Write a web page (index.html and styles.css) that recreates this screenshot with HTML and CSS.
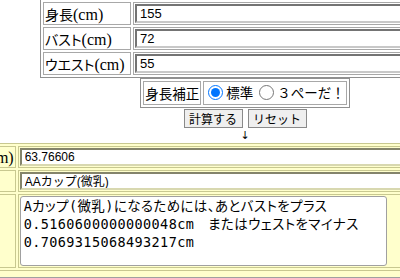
FILE: index.html
```html
<!DOCTYPE html>
<html lang="ja">
<head>
    <meta charset="UTF-8">
    <title>カップ計算</title>
    <link rel="stylesheet" href="styles.css">
</head>
<body>
<div class="page">
    <table class="body_size">
        <tr>
            <th>身長<span class="unit">(cm)</span></th>
            <td><input type="text" value="155"></td>
        </tr>
        <tr>
            <th>バスト<span class="unit">(cm)</span></th>
            <td><input type="text" value="72"></td>
        </tr>
        <tr>
            <th>ウエスト<span class="unit">(cm)</span></th>
            <td><input type="text" value="55"></td>
        </tr>
    </table>

    <table class="adjust">
        <tr>
            <th>身長補正</th>
            <td>
                <label><input type="radio" name="adj" checked>標準</label>
                <label><input type="radio" name="adj">３ぺーだ！</label>
            </td>
        </tr>
    </table>

    <div class="buttons">
        <button type="button">計算する</button>
        <button type="button">リセット</button>
    </div>
    <div class="arrow">↓</div>

    <div class="result_wrap">
        <table class="result">
            <tr>
                <th>アンダー<span class="unit">(cm)</span></th>
                <td><input type="text" value="63.76606" readonly></td>
            </tr>
            <tr>
                <th>カップ</th>
                <td><input type="text" value="AAカップ(微乳)" readonly></td>
            </tr>
            <tr>
                <th>アドバイス</th>
                <td><textarea readonly>Aカップ(微乳)になるためには、あとバストをプラス
0.5160600000000048cm　またはウェストをマイナス
0.7069315068493217cm</textarea></td>
            </tr>
        </table>
    </div>
</div>
</body>
</html>
```

FILE: styles.css
```css
*{
    box-sizing: border-box;
}
html, body{
    margin: 0;
    padding: 0;
    background: #fff;
    overflow: hidden;
}
body{
    width: 400px;
    height: 278px;
    font-family: "Liberation Serif", "Noto Sans CJK JP", serif;
    color: #000;
}
.page{
    width: 490px;
}

/* 上の入力テーブル */
.body_size{
    width: 600px;
    margin: -1px 0 0 40px;
    border: 1px solid #909090;
    border-spacing: 2px;
}
.body_size th{
    width: 88px;
    height: 23px;
    padding: 0 1px;
    border: 1px solid #a8a8a8;
    text-align: left;
    font-weight: normal;
    font-size: 14px;
    font-family: "Noto Sans CJK JP", sans-serif;
    font-feature-settings: "palt";
    white-space: nowrap;
}
.unit{
    font-family: "Liberation Serif", serif;
    font-size: 16px;
}
.body_size td{
    padding: 1px;
    border: 1px solid #a8a8a8;
}
.body_size input{
    display: block;
    width: 100%;
    height: 19px;
    padding: 0 3px;
    border: 2px inset #c8c8c8;
    font-family: "Liberation Sans", sans-serif;
    font-size: 13px;
}

/* 身長補正 */
.adjust{
    margin: 0 auto;
    border: 1px solid #909090;
    border-spacing: 2px;
    font-family: "Noto Sans CJK JP", sans-serif;
    font-size: 13.5px;
}
.adjust th, .adjust td{
    height: 23px;
    padding: 0 1px;
    border: 1px solid #a8a8a8;
    font-weight: normal;
    white-space: nowrap;
}
.adjust label{
    display: inline-flex;
    align-items: center;
}
.adjust input{
    width: 15px;
    height: 15px;
    margin: 0 3px 0 3px;
}

.buttons{
    display: flex;
    justify-content: center;
    gap: 5px;
    margin-top: 1px;
}
.buttons button{
    width: 59px;
    height: 19px;
    padding: 0;
    border: 1px solid #8a8a8a;
    background: #efefef;
    font-family: "Noto Sans CJK JP", sans-serif;
    font-size: 12px;
    line-height: 17px;
}
.arrow{
    height: 15px;
    text-align: center;
    font-family: "DejaVu Sans", sans-serif;
    font-size: 11px;
    line-height: 15px;
}

/* 結果 */
.result_wrap{
    width: 640px;
    margin-left: -77px;
    padding-bottom: 6px;
    background: #ffffcc;
    border-bottom: 1px solid #a0a0a0;
}
.result{
    width: 100%;
    border: 1px solid #c8c890;
    border-spacing: 2px;
    background: #ffffcc;
}
.result th{
    padding: 0 1px;
    border: 1px solid #c8c890;
    font-weight: normal;
    font-size: 14px;
    font-family: "Noto Sans CJK JP", sans-serif;
    white-space: nowrap;
    text-align: left;
}
.result td{
    width: 100%;
    padding: 1px;
    border: 1px solid #c8c890;
}
.result input{
    display: block;
    width: 100%;
    height: 18px;
    padding: 0 3px;
    border: 2px inset #d8d8b0;
    background: #fff;
    font-family: "Liberation Sans", "Noto Sans CJK JP", sans-serif;
    font-size: 12px;
}
.result textarea{
    display: block;
    width: 367px;
    height: 70px;
    margin: 0;
    padding: 0 3px;
    border: 1px solid #a0a0a0;
    border-radius: 3px;
    background: #fff;
    font-family: "DejaVu Sans Mono", "Noto Sans CJK JP", monospace;
    font-size: 13.5px;
    font-feature-settings: "palt";
    letter-spacing: 0.4px;
    line-height: 18px;
    resize: none;
    overflow: hidden;
}
```
